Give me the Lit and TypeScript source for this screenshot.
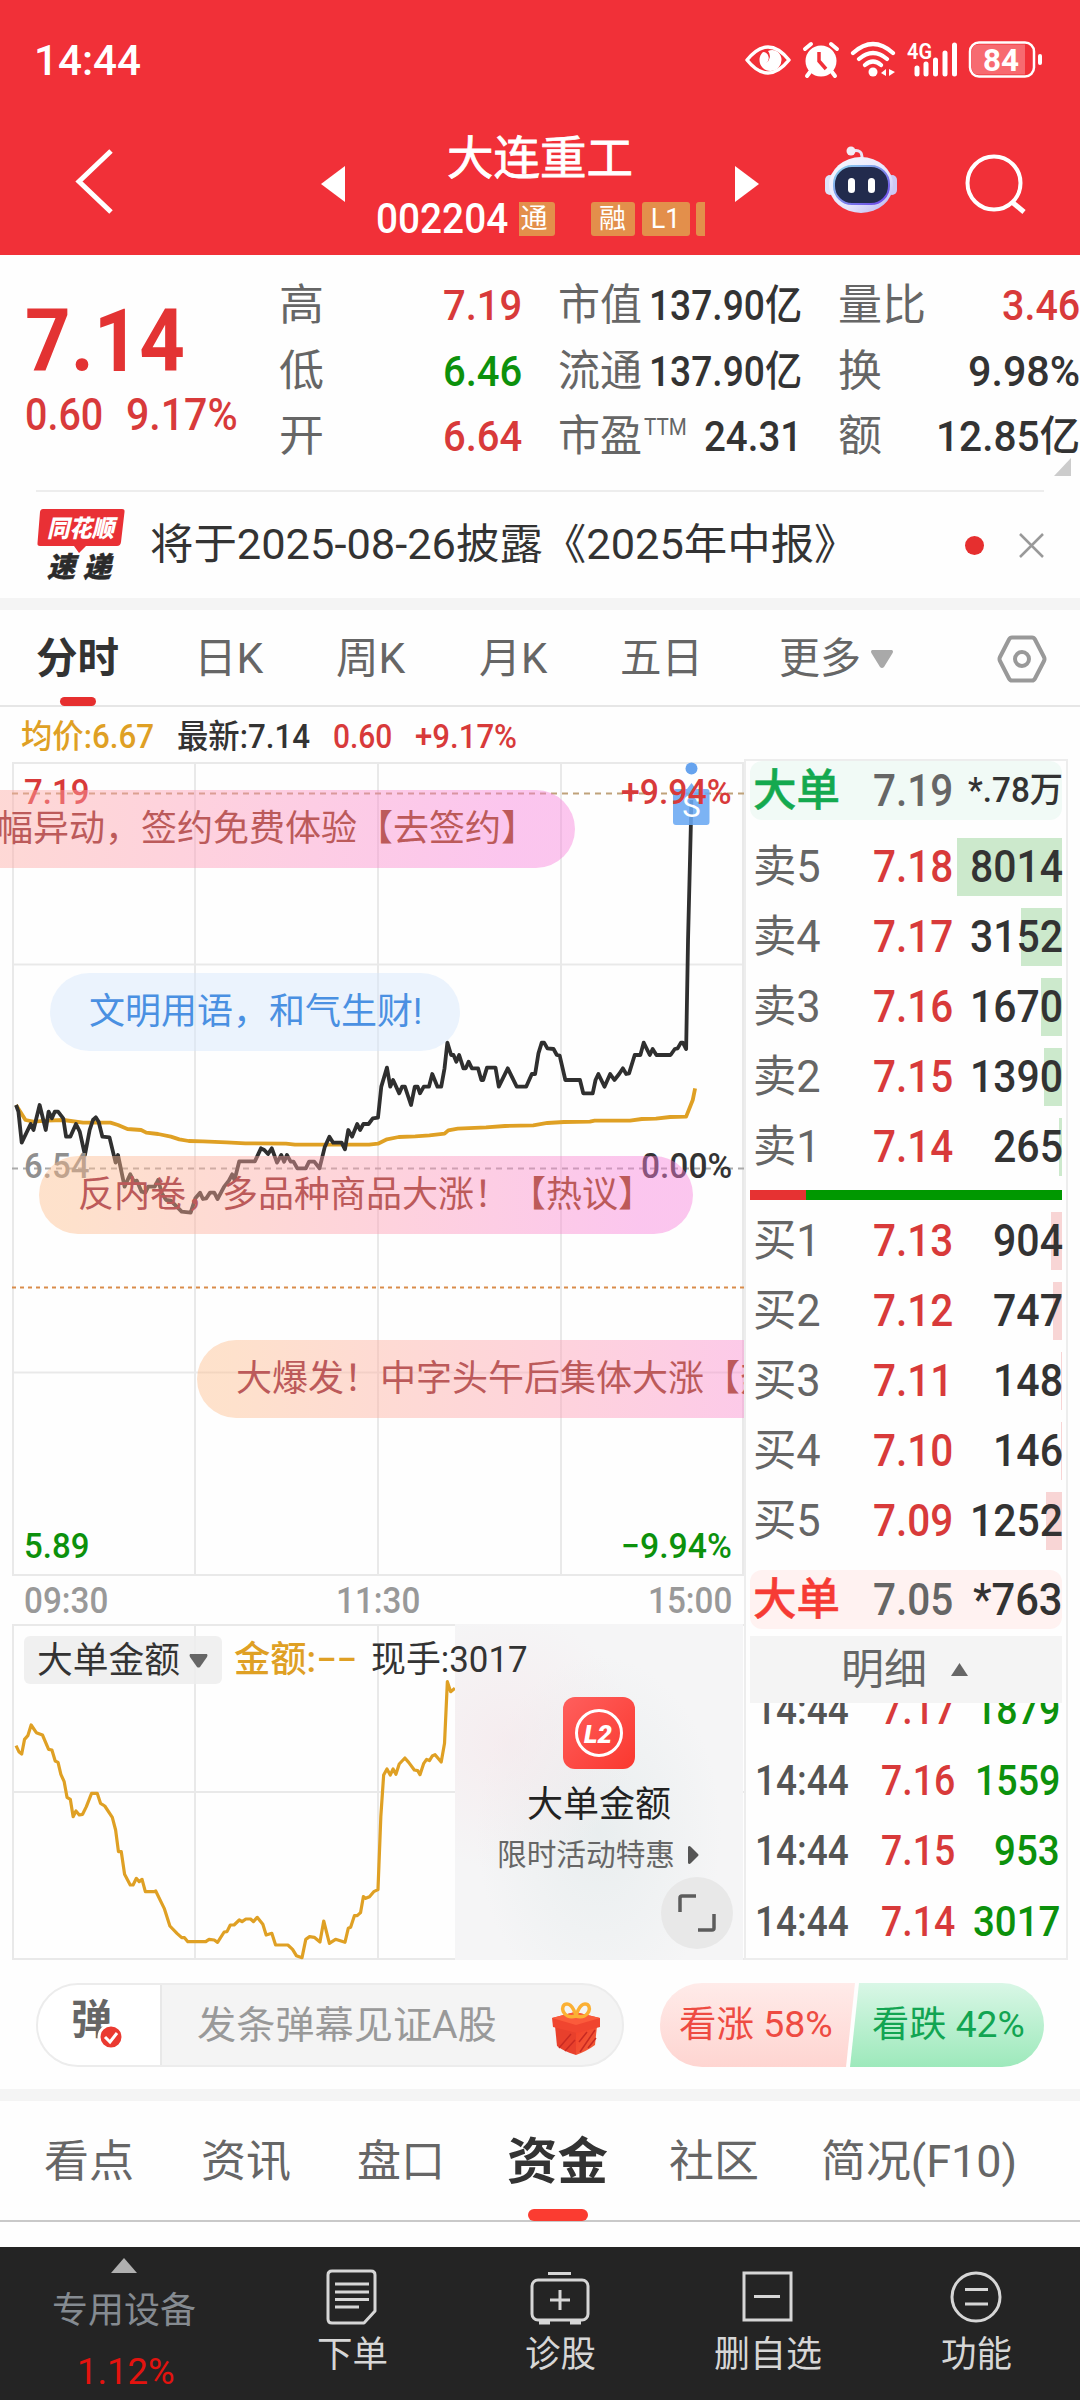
import { LitElement, html, css } from "lit";
import { customElement, property } from "lit/decorators.js";

/** A one-line label whose glyphs are condensed or widened to fill `w` pixels. */
@customElement("fit-text")
class FitText extends LitElement {
  @property({ type: Number }) w = 0;
  @property() text = "";

  static styles = css`
    :host { display: inline-block; flex: none; white-space: nowrap; line-height: 1; }
    span { display: inline-block; transform-origin: 0 50%; white-space: pre; }
  `;

  updated() {
    const span = this.renderRoot.querySelector("span") as HTMLElement;
    const natural = span.offsetWidth;
    this.style.width = `${this.w}px`;
    if (natural > 0 && this.w > 0) {
      span.style.transform = `scaleX(${this.w / natural})`;
      span.style.marginRight = `${this.w - natural}px`;
    }
  }

  render() {
    return html`<span>${this.text}</span>`;
  }
}

const fit = (text: string, w: number, cls = "") =>
  html`<fit-text class=${cls} .w=${w} .text=${text}></fit-text>`;

const PRICE_LINE =
  "34,495 39,515 46,608 65,552 71,570 84,495 97,570 103,515 110,535 116,515 123,515 134,535 140,590 149,590 161,552 169,575 180,645 190,570 197,540 203,532 209,545 217,590 232,592 245,668 250,645 264,740 276,703 284,725 290,722 300,755 308,758 314,740 328,740 335,720 343,760 352,780 362,782 385,815 404,818 414,775 424,758 430,777 437,775 445,758 454,758 461,777 475,740 485,722 492,703 497,720 507,664 540,664 553,625 560,630 568,642 576,625 587,668 596,645 602,665 608,645 616,665 622,665 630,685 648,685 655,665 666,665 677,685 688,622 698,590 706,608 724,608 731,628 738,570 746,590 757,552 763,570 770,552 781,552 790,535 801,533 808,440 820,383 827,440 833,420 846,460 852,440 858,440 871,495 879,440 885,440 890,460 898,440 909,440 916,402 927,440 935,440 942,385 948,308 956,345 961,345 967,365 973,345 982,385 987,385 993,365 1000,385 1013,385 1020,420 1024,420 1032,383 1050,383 1057,440 1076,385 1095,440 1115,440 1127,402 1134,402 1141,340 1148,308 1153,308 1160,325 1173,327 1180,345 1186,347 1198,420 1229,420 1236,460 1256,460 1262,420 1268,402 1281,440 1293,402 1302,420 1312,402 1320,385 1327,402 1333,400 1345,345 1357,345 1364,308 1377,345 1383,327 1391,345 1421,345 1430,327 1436,325 1443,308 1447,308 1454,327 1458,0 1464,-345 1465,-420";
const AVERAGE_LINE =
  "34,495 43,515 54,540 71,545 100,542 134,540 150,543 176,548 206,548 234,548 250,555 270,567 299,570 310,578 335,582 362,590 380,598 400,603 430,604 480,607 520,610 606,611 625,614 782,614 801,611 820,598 845,591 880,589 910,586 942,581 950,571 970,566 1030,562 1070,558 1130,556 1160,549 1195,546 1250,545 1260,542 1335,542 1360,537 1390,536 1420,531 1454,530 1468,480 1473,445";
const AMOUNT_LINE =
  "34,437 40,455 46,462 52,418 59,407 66,375 77,398 90,405 103,448 110,450 117,483 123,487 129,523 136,545 142,592 149,598 155,650 161,633 168,645 175,643 183,620 194,580 206,580 213,610 222,618 238,652 245,690 251,755 257,755 264,823 276,855 282,855 289,835 295,845 301,838 308,875 326,875 330,873 348,925 360,978 375,1000 385,1013 391,1013 398,1025 436,1025 443,1018 454,1020 461,1027 475,996 481,995 488,975 496,975 507,960 513,965 521,957 531,957 537,965 545,952 557,973 564,1005 576,1000 584,1035 610,1035 620,1048 628,1067 640,1073 648,1018 656,1010 666,1012 678,1026 686,963 698,1030 711,1018 731,1027 738,985 743,982 751,947 757,947 764,938 770,890 775,895 783,890 792,875 801,869 807,650 813,525 820,507 827,525 833,507 839,523 846,492 858,474 866,487 878,510 885,512 890,524 898,490 904,478 910,482 916,468 922,464 935,486 942,430 948,245 955,275 964,265";

interface Level { name: string; price: string; qty: string; qtyWidth: number; bar: number; }

const SELLS: Level[] = [
  { name: "卖5", price: "7.18", qty: "8014", qtyWidth: 93, bar: 105 },
  { name: "卖4", price: "7.17", qty: "3152", qtyWidth: 93, bar: 41 },
  { name: "卖3", price: "7.16", qty: "1670", qtyWidth: 93, bar: 21 },
  { name: "卖2", price: "7.15", qty: "1390", qtyWidth: 93, bar: 18 },
  { name: "卖1", price: "7.14", qty: "265", qtyWidth: 70, bar: 3 },
];
const BUYS: Level[] = [
  { name: "买1", price: "7.13", qty: "904", qtyWidth: 70, bar: 11 },
  { name: "买2", price: "7.12", qty: "747", qtyWidth: 70, bar: 9 },
  { name: "买3", price: "7.11", qty: "148", qtyWidth: 70, bar: 1 },
  { name: "买4", price: "7.10", qty: "146", qtyWidth: 70, bar: 1 },
  { name: "买5", price: "7.09", qty: "1252", qtyWidth: 93, bar: 16 },
];
const TICKS: [string, string, number][] = [
  ["7.17", "1879", 85],
  ["7.16", "1559", 85],
  ["7.15", "953", 66],
  ["7.14", "3017", 87],
];

@customElement("app-root")
class AppRoot extends LitElement {
  static styles = css`
    :host {
      display: block; width: 1080px; height: 2400px; overflow: hidden; background: #fefefe; color: #333;
      font-family: Roboto, "Noto Sans CJK SC", sans-serif; line-height: 1;
    }
    * { box-sizing: border-box; }
    svg { display: block; flex: none; }
    .row { display: flex; align-items: center; }
    .red { color: #d83a3a; }
    .green { color: #0c910c; }
    .gold { color: #dfa024; }
    .gray { color: #666; }
    .m { font-weight: 500; }

    .top { height: 255px; background: #f13038; color: #fff; }
    .status { height: 118px; padding: 2px 37px 0 34px; justify-content: space-between; font-size: 43px; font-weight: 500; }
    .title-bar { height: 137px; padding-left: 75px; }
    .back { margin: -10px 207px 0 0; }
    .stock { width: 390px; height: 137px; display: flex; flex-direction: column; align-items: center; font-size: 46px; padding-top: 17px; }
    .stock .name { -webkit-text-stroke: .8px #fff; margin-left: -1px; }
    .stock .code-row { margin-top: 20px; font-size: 42px; height: 36px; width: 329px; }
    .tag { display: flex; align-items: center; justify-content: center; height: 34px; background: #e38f4b; border-radius: 3px; color: #fff; font-size: 27px; }
    .t1 { width: 36px; margin: 0 36px 0 11px; padding-right: 5px; border-radius: 0 3px 3px 0; }
    .t2 { width: 44px; margin-right: 7px; }
    .t3 { width: 48px; margin-right: 6px; }
    .t4 { width: 9px; border-radius: 3px 0 0 3px; }
    .arrow { margin-top: -6px; }
    .robot { margin: -13px 68px 0 66px; }
    .find { margin-top: -6px; }

    .quote { display: grid; grid-template-columns: 279px 278px 281px 242px; height: 235px; position: relative; }
    .quote .price { padding: 42px 0 0 25px; }
    .big { font-size: 88px; font-weight: 700; color: #e33333; }
    .delta { margin-top: 8px; font-size: 44px; gap: 23px; font-weight: 500; }
    .facts { padding-top: 18px; }
    .fact { height: 65.5px; display: flex; align-items: center; justify-content: space-between; font-size: 43px; }
    .c1 .fact { width: 243px; }
    .c2 .fact { width: 244px; margin-left: 1px; }
    .c3 .fact { width: 242px; }
    .fact .m { font-size: 42px; padding-top: 1px; }
    .ttm { font-size: 24px; margin: -20px auto 0 2px; }
    .corner { position: absolute; left: 1054px; top: 203px; width: 17px; height: 18px; background: #ccc; clip-path: polygon(100% 0, 100% 100%, 0 100%); }
    .news { margin: 0 36px; height: 108px; border-top: 2px solid #ededed; font-size: 42px; }
    .news .logo { margin-right: 24px; }
    .news .dot { width: 19px; height: 19px; border-radius: 50%; background: #e62f2f; margin: 0 35px 0 auto; }
    .band { height: 12px; background: #f4f4f4; }

    .periods { height: 97px; border-bottom: 2px solid #e6e6e6; font-size: 42px; color: #666; padding: 2px 0 0 36px; position: relative; }
    .periods .on { font-weight: 700; color: #333; margin-right: 75px; }
    .periods .mark { position: absolute; left: 60px; top: 87px; width: 36px; height: 9px; border-radius: 5px; background: #e62f2f; }
    .g1 { margin-right: 73px; } .g2 { margin-right: 74px; } .g3 { margin-right: 73px; } .g4 { margin-right: 76px; } .g5 { margin-right: 10px; }
    .hex { margin-left: 104px; }

    .main { display: flex; height: 1253px; }
    .left { width: 744px; flex: none; }
    .summary { height: 55px; padding: 3px 0 0 21px; font-size: 33px; font-weight: 500; gap: 23px; }
    .chart { position: relative; height: 814px; overflow: hidden; }
    .chart svg { position: absolute; inset: 0; }
    .ax { position: absolute; font-size: 35px; font-weight: 500; }
    .l { left: 24px; } .r { right: 12px; }
    .base { color: #8f8f8f; }
    .y1 { top: 13px; } .y2 { top: 387px; } .y3 { top: 767px; }
    .bubble { position: absolute; height: 78px; line-height: 78px; border-radius: 39px; padding: 0 38px 0 39px; font-size: 36px; white-space: nowrap; color: #bc5a5a;
      background: linear-gradient(90deg, rgba(255,189,139,.44) 4%, rgba(255,157,175,.44) 50%, rgba(248,126,218,.44) 92%); }
    .b1 { left: -283px; top: 28px; width: 858px; text-align: right; }
    .b2 { left: 50px; top: 211px; width: 410px; background: rgba(212,230,253,.44); color: #4a90e2; }
    .b3 { left: 39px; top: 394px; width: 654px; }
    .b4 { left: 197px; top: 578px; width: 692px; }
    .times { height: 48px; padding: 2px 12px 0 24px; justify-content: space-between; font-size: 36px; color: #999; font-weight: 500; }
    .sub { position: relative; height: 336px; overflow: hidden; }
    .sub > svg { position: absolute; inset: 0; }
    .promo { position: absolute; left: 455px; top: 0; width: 288px; height: 336px; display: flex; flex-direction: column; align-items: center; padding-top: 73px; font-size: 36px;
      background: radial-gradient(circle at 18% 35%, rgba(246,228,232,.5), transparent 40%), radial-gradient(ellipse at 50% 62%, rgba(230,236,237,.8), transparent 60%), #f5f5f6; }
    .promo .name { margin-top: 18px; color: #222; }
    .promo .deal { font-size: 30px; color: #666; margin-top: 17px; gap: 13px; margin-left: -2px; }
    .expand { position: absolute; left: 206px; top: 253px; width: 72px; height: 72px; border-radius: 50%; background: #e8e8e8; display: flex; align-items: center; justify-content: center; }
    .legend { position: relative; padding: 12px 0 0 24px; font-size: 36px; }
    .legend .pick { width: 198px; height: 48px; border-radius: 6px; background: rgba(237,237,237,.85); padding: 1px 0 0 13px; gap: 9px; margin-right: 12px; }
    .legend .gold { margin-right: 14px; font-weight: 500; }

    .book { width: 324px; margin-top: 52px; height: 1201px; border: 2px solid #ededed; padding: 0 4px; font-size: 44px; overflow: hidden; }
    .lvl { position: relative; height: 70px; display: flex; align-items: center; padding-left: 3px; }
    .lvl .p { position: absolute; left: 123px; }
    .lvl .q { position: absolute; right: -1px; }
    .lvl .depth { position: absolute; right: 0; top: 6px; height: 58px; background: #cce9cc; }
    .lvl.buy .depth { background: #f8d5d5; }
    .large { height: 59px; border-radius: 12px; background: #f1faf6; }
    .large .small { font-size: 35px; }
    .large .nm { color: #14a94f; -webkit-text-stroke: .5px currentColor; }
    .large.hot { background: #fff2f1; }
    .large.hot .nm { color: #f63b34; }
    .ratio { height: 10px; margin: 8px 0 6px; display: flex; background: #009800; }
    .ratio i { width: 56px; background: #e63232; }
    .detail { height: 67px; background: #f4f4f4; margin-top: 7px; padding-left: 91px; gap: 24px; font-size: 42px; position: relative; }
    .gap { height: 12px; }
    .gap.wide { height: 14px; }
    .ticks { height: 254px; overflow: hidden; font-size: 42px; font-weight: 500; }
    .tick { height: 70.5px; display: flex; align-items: center; padding: 0 2px 0 5px; position: relative; top: -28px; }
    .tick .time { color: #555; margin-right: 32px; }
    .tick .q2 { margin-left: auto; }

    .talk { height: 129px; padding: 1px 36px 0; }
    .pill { width: 588px; height: 84px; border: 2px solid #ececec; border-radius: 42px; overflow: hidden; background: #f4f4f4; display: flex; margin-right: 36px; }
    .dan { width: 124px; background: #fff; border-right: 2px solid #e8e8e8; position: relative; font-size: 41px; font-weight: 700; color: #666; padding: 15px 0 0 33px; }
    .dan svg { position: absolute; left: 59px; top: 38px; }
    .ask { width: 461px; padding-left: 35px; color: #999; font-size: 38px; justify-content: space-between; padding-right: 21px; }
    .ask svg { margin-top: 8px; }
    .vote { display: flex; width: 384px; height: 84px; border-radius: 42px; overflow: hidden; font-size: 36px; }
    .vote div { display: flex; align-items: center; height: 84px; }
    .up { width: 195px; padding-left: 19px; color: #ee4b42; background: linear-gradient(#ffebe9, #fed5d1); clip-path: polygon(0 0, 100% 0, 186px 100%, 0 100%); }
    .down { width: 194px; margin-left: -5px; padding-left: 22px; color: #12a552; background: linear-gradient(#d9f7e6, #9de9bb); clip-path: polygon(9px 0, 100% 0, 100% 100%, 0 100%); }

    .sections { height: 121px; border-bottom: 2px solid #c9c9c9; padding: 3px 0 0 44px; font-size: 44px; color: #666; position: relative; }
    .sections .cur { font-size: 50px; font-weight: 700; color: #333; }
    .sections .line { position: absolute; left: 528px; top: 108px; width: 60px; height: 12px; border-radius: 6px; background: #fb3c31; }
    .s1 { margin-right: 67px; } .s2 { margin-right: 66px; } .s3 { margin-right: 62px; } .s4 { margin-right: 61px; } .s5 { margin-right: 62px; }

    .nav { margin-top: 25px; height: 154px; background: #242424; display: flex; color: #d6d6d6; font-size: 36px; }
    .sector { width: 248px; display: flex; flex-direction: column; align-items: center; padding-top: 11px; color: #858b91; }
    .sector fit-text { margin-top: 20px; }
    .sector .chg { margin-top: 25px; margin-left: 3px; color: #e3130f; }
    .item { width: 208px; display: flex; flex-direction: column; align-items: center; padding-top: 22px; }
    .item fit-text { margin-top: 12px; }
  `;

  private level(l: Level, side: string) {
    return html`<div class="lvl ${side}">
      <div class="depth" style="width:${l.bar}px"></div>
      ${fit(l.name, 68, "gray")}
      ${fit(l.price, 80, "p m red")}
      ${fit(l.qty, l.qtyWidth, "q m")}
    </div>`;
  }

  private statusIcons() {
    return html`<svg width="300" height="40" viewBox="743 38 300 40" fill="none" stroke="#fff">
      <path d="M747 58 Q768 32 789 58 Q768 84 747 58Z" stroke-width="3.5" stroke-linejoin="round"/>
      <path d="M763 50 A11 11 0 1 0 778 50 A10 10 0 0 0 768 49 A8 8 0 0 1 766 61 A6 6 0 0 0 763 50Z" fill="#fff" stroke="none"/>
      <circle cx="821" cy="59" r="15.5" fill="#fff" stroke="none"/>
      <path d="M805 47 L811 42 M837 47 L831 42 M810 70 L807 74 M832 70 L835 74" stroke-width="4" stroke-linecap="round"/>
      <path d="M819 50 V59 L826 67" stroke="#f13038" stroke-width="3.5"/>
      <path d="M853 51 Q873 33 893 51 M859 57 Q873 45 887 57 M865 63 Q873 56 881 63" stroke-width="4.2" stroke-linecap="round"/>
      <circle cx="873" cy="70" r="4.5" fill="#fff" stroke="none"/>
      <path d="M881 71 L886 67 V74Z M895 70 L889 67 V74Z" fill="#fff" stroke="none"/>
      <path d="M917 66 V72 M926 62 V72 M935.500 58 V72 M945 51 V72 M954.500 43 V72" stroke-width="5" stroke-linecap="round"/>
      <text x="907" y="57" font-size="22" font-weight="600" fill="#fff" stroke="none" textLength="25" lengthAdjust="spacingAndGlyphs">4G</text>
      <rect x="970" y="40.500" width="64" height="34" rx="9" stroke-width="2.500"/>
      <path d="M978 42.500 H1025 V72.500 H978 Q972 72.500 972 66.500 V48.500 Q972 42.500 978 42.500Z" fill="#f76a70" stroke="none"/>
      <rect x="1038" y="52" width="4" height="11" rx="2" fill="#fff" stroke="none"/>
      <text x="983" y="69" font-size="32" font-weight="700" fill="#fff" stroke="none" textLength="36" lengthAdjust="spacingAndGlyphs">84</text>
    </svg>`;
  }

  private chart() {
    return html`<svg width="744" height="814" viewBox="0 0 744 814" fill="none">
      <path d="M13 0 V814 M195 0 V814 M378 0 V814 M561 0 V814 M743 0 V814 M12 202.500 H744 M12 610.500 H744 M12 1 H744 M12 813 H744" stroke="#e9e9e9" stroke-width="2"/>
      <path d="M12 31.500 H744" stroke="#bfa27a" stroke-width="2" stroke-dasharray="6 5"/>
      <path d="M12 406.500 H744" stroke="#aaa" stroke-width="2" stroke-dasharray="6 5"/>
      <path d="M12 525.500 H744" stroke="#d98c4a" stroke-width="2" stroke-dasharray="4 4"/>
      <g transform="translate(0 178) scale(.4719 .33333)" stroke-width="3.800" stroke-linejoin="round">
        <polyline points=${AVERAGE_LINE} stroke="#dfa024" vector-effect="non-scaling-stroke"/>
        <polyline points=${PRICE_LINE} stroke="#2f2f2f" vector-effect="non-scaling-stroke"/>
      </g>
      <circle cx="691.500" cy="6.500" r="6" fill="#66a3ee"/>
      <path d="M676 27 H687 L691.500 21 L696 27 H707 Q709.500 27 709.500 30 V60 Q709.500 63 706.500 63 H676 Q673 63 673 60 V30 Q673 27 676 27Z" fill="#6aa9f2" fill-opacity=".88"/>
      <text x="691.500" y="55" text-anchor="middle" font-size="31" fill="#fff">S</text>
    </svg>`;
  }

  render() {
    return html`
      <div class="top">
        <div class="row status">${fit("14:44", 107)}${this.statusIcons()}</div>
        <div class="row title-bar">
          <svg class="back" width="39" height="68" viewBox="0 0 39 68"><path d="M36 3 L4 33.500 L36 64" fill="none" stroke="#fff" stroke-width="5"/></svg>
          <svg class="arrow" width="24" height="36"><path d="M24 0 V36 L0 18Z" fill="#fff"/></svg>
          <div class="stock">
            ${fit("大连重工", 186, "name")}
            <div class="row code-row">
              ${fit("002204", 132, "m")}
              <span class="tag t1">通</span><span class="tag t2">融</span><span class="tag t3">L1</span><span class="tag t4"></span>
            </div>
          </div>
          <svg class="arrow" width="24" height="36"><path d="M0 0 V36 L24 18Z" fill="#fff"/></svg>
          <svg class="robot" width="72" height="68" viewBox="0 0 72 68">
            <defs>
              <linearGradient id="hd" x1="0" y1="0" x2="1" y2="1"><stop offset="0" stop-color="#f7f8ff"/><stop offset=".6" stop-color="#e6e5fb"/><stop offset="1" stop-color="#b3aef0"/></linearGradient>
              <linearGradient id="rim" x1="0" y1="0" x2="1" y2="1"><stop offset="0" stop-color="#8fd8ee"/><stop offset="1" stop-color="#6a3fe6"/></linearGradient>
            </defs>
            <path d="M27 5 Q38 2 37 14" fill="none" stroke="#e9e4f6" stroke-width="3"/><circle cx="26" cy="5" r="4.500" fill="#f3ecf6"/>
            <rect x="0" y="29" width="10" height="20" rx="5" fill="#dfe3fa"/><rect x="62" y="29" width="10" height="20" rx="5" fill="#cdc8f3"/>
            <ellipse cx="36" cy="39" rx="32" ry="28" fill="url(#hd)"/>
            <rect x="9" y="20" width="55" height="38" rx="18" fill="#222b4d" stroke="url(#rim)" stroke-width="2"/>
            <rect x="23" y="32" width="7" height="15" rx="3.500" fill="#fff"/><rect x="43" y="32" width="7" height="15" rx="3.500" fill="#fff"/>
          </svg>
          <svg class="find" width="62" height="62" viewBox="0 0 62 62" fill="none" stroke="#fff" stroke-width="4"><circle cx="29" cy="30" r="26.500"/><path d="M47 49 L59 59" stroke-width="5"/></svg>
        </div>
      </div>

      <div class="quote">
        <div class="price">
          ${fit("7.14", 160, "big")}
          <div class="row delta red">${fit("0.60", 78)}${fit("9.17%", 112)}</div>
        </div>
        <div class="facts c1">
          <div class="fact">${fit("高", 45, "gray")}${fit("7.19", 79, "m red")}</div>
          <div class="fact">${fit("低", 45, "gray")}${fit("6.46", 79, "m green")}</div>
          <div class="fact">${fit("开", 45, "gray")}${fit("6.64", 79, "m red")}</div>
        </div>
        <div class="facts c2">
          <div class="fact">${fit("市值", 84, "gray")}${fit("137.90亿", 153, "m")}</div>
          <div class="fact">${fit("流通", 84, "gray")}${fit("137.90亿", 153, "m")}</div>
          <div class="fact">${fit("市盈", 84, "gray")}${fit("TTM", 43, "gray ttm")}${fit("24.31", 98, "m")}</div>
        </div>
        <div class="facts c3">
          <div class="fact">${fit("量比", 88, "gray")}${fit("3.46", 78, "m red")}</div>
          <div class="fact">${fit("换", 44, "gray")}${fit("9.98%", 112, "m")}</div>
          <div class="fact">${fit("额", 44, "gray")}${fit("12.85亿", 144, "m")}</div>
        </div>
        <i class="corner"></i>
      </div>

      <div class="row news">
        <svg class="logo" width="90" height="74" viewBox="0 0 90 74">
          <path d="M7 1 H86 Q89 1 88.500 4 L85 34 Q84.500 38 81 38 H50 L43 45 L38 38 H4 Q1 38 1.500 35 L4 4 Q4.500 1 7 1Z" fill="#e93035"/>
          <g font-weight="900" font-style="italic"><text x="11" y="29" font-size="24" fill="#fff" textLength="67" lengthAdjust="spacingAndGlyphs">同花顺</text>
          <text x="11" y="69" font-size="28" fill="#2b2b2b" stroke="#2b2b2b" stroke-width=".5" textLength="64">速递</text></g>
        </svg>
        ${fit("将于2025-08-26披露《2025年中报》", 707)}
        <i class="dot"></i>
        <svg width="25" height="25" viewBox="0 0 25 25" stroke="#999" stroke-width="2.500"><path d="M1 1 L24 24 M24 1 L1 24"/></svg>
      </div>
      <div class="band"></div>

      <div class="row periods">
        ${fit("分时", 83, "on")}${fit("日K", 69, "g1")}${fit("周K", 69, "g2")}${fit("月K", 68, "g3")}${fit("五日", 83, "g4")}${fit("更多", 82, "g5")}
        <svg width="22" height="18"><path d="M1 0 H21 Q23 1 21 4 L13 17 Q11 19 9 17 L1 4 Q-1 1 1 0Z" fill="#a9a9a9"/></svg>
        <svg class="hex" width="50" height="48" viewBox="0 0 50 48" fill="none" stroke="#999" stroke-width="4"><path d="M15 2.500 H35 Q37 2.500 38 4.500 L47 22 Q48 24 47 26 L38 43.500 Q37 45.500 35 45.500 H15 Q13 45.500 12 43.500 L3 26 Q2 24 3 22 L12 4.500 Q13 2.500 15 2.500Z" stroke-linejoin="round"/><circle cx="25" cy="24" r="7"/></svg>
        <i class="mark"></i>
      </div>

      <div class="main">
        <div class="left">
          <div class="row summary">${fit("均价:6.67", 133, "gold")}${fit("最新:7.14", 133)}${fit("0.60", 59, "red")}${fit("+9.17%", 102, "red")}</div>
          <div class="chart">
            ${this.chart()}
            ${fit("7.19", 65, "ax l y1 red")}${fit("+9.94%", 111, "ax r y1 red")}
            ${fit("6.54", 65, "ax l y2 base")}${fit("0.00%", 91, "ax r y2")}
            ${fit("5.89", 65, "ax l y3 green")}${fit("−9.94%", 111, "ax r y3 green")}
            <div class="bubble b1">幅异动，签约免费体验【去签约】</div>
            <div class="bubble b2">文明用语，和气生财!</div>
            <div class="bubble b3">反内卷，多品种商品大涨！【热议】</div>
            <div class="bubble b4">大爆发！中字头午后集体大涨【热议】</div>
          </div>
          <div class="row times">${fit("09:30", 84)}${fit("11:30", 84)}${fit("15:00", 84)}</div>
          <div class="sub">
            <svg width="744" height="336" viewBox="0 0 744 336" fill="none">
              <path d="M13 0 V336 M195 0 V336 M378 0 V336 M12 1 H744 M12 168 H744 M12 335 H744" stroke="#e9e9e9" stroke-width="2"/>
              <g transform="translate(0 -24) scale(.4719 .33333)"><polyline points=${AMOUNT_LINE} stroke="#dfa024" stroke-width="3.200" stroke-linejoin="round" vector-effect="non-scaling-stroke"/></g>
            </svg>
            <div class="promo">
              <svg width="72" height="72" viewBox="0 0 72 72">
                <defs><linearGradient id="l2" x1="0" y1="0" x2="1" y2="1"><stop offset="0" stop-color="#ff5f5d"/><stop offset="1" stop-color="#fa382f"/></linearGradient></defs>
                <rect width="72" height="72" rx="12" fill="url(#l2)"/><circle cx="36" cy="36" r="22.500" fill="none" stroke="#fff" stroke-width="3"/>
                <text x="21" y="46" font-size="25" font-weight="900" font-style="italic" fill="#fff" textLength="28" lengthAdjust="spacingAndGlyphs">L2</text>
              </svg>
              ${fit("大单金额", 144, "name")}
              <div class="row deal">${fit("限时活动特惠", 178)}<svg width="11" height="18"><path d="M0 1 Q1 -1 3 1 L10 8 Q11 9 10 10 L3 17 Q1 19 0 17Z" fill="#555"/></svg></div>
              <div class="expand"><svg width="38" height="38" viewBox="0 0 38 38" fill="none" stroke="#5c5c5c" stroke-width="3.500"><path d="M2 18 V4 Q2 2 4 2 H18 M36 20 V34 Q36 36 34 36 H20"/></svg></div>
            </div>
            <div class="row legend">
              <div class="row pick">${fit("大单金额", 143)}<svg width="19" height="14"><path d="M1 0 H18 Q19 1 18 3 L11 13 Q9.500 14 8 13 L1 3 Q0 1 1 0Z" fill="#666"/></svg></div>
              ${fit("金额:−−", 123, "gold")}${fit("现手:3017", 157)}
            </div>
          </div>
        </div>

        <div class="book">
          <div class="lvl large">${fit("大单", 87, "nm m")}${fit("7.19", 80, "p m gray")}${fit("*.78万", 95, "q m small")}</div>
          <div class="gap"></div>
          ${SELLS.map((l) => this.level(l, "sell"))}
          <div class="ratio"><i></i></div>
          ${BUYS.map((l) => this.level(l, "buy"))}
          <div class="gap wide"></div>
          <div class="lvl large hot">${fit("大单", 87, "nm m")}${fit("7.05", 80, "p m gray")}${fit("*763", 90, "q m")}</div>
          <div class="row detail gray">${fit("明细", 86)}<svg width="17" height="13"><path d="M0 13 L8.500 0 L17 13Z" fill="#666"/></svg></div>
          <div class="ticks">
            ${TICKS.map(([p, q, w]) => html`<div class="tick">${fit("14:44", 94, "time")}${fit(p, 74, "red")}${fit(q, w, "q2 green")}</div>`)}
          </div>
        </div>
      </div>

      <div class="row talk">
        <div class="pill">
          <div class="dan">${fit("弹", 41)}
            <svg width="28" height="28" viewBox="0 0 28 28"><circle cx="14" cy="14" r="12" fill="#ea3a31" stroke="#fff" stroke-width="3"/><path d="M8 14 L13 19 L20 10" fill="none" stroke="#fff" stroke-width="3"/></svg>
          </div>
          <div class="row ask">${fit("发条弹幕见证A股", 300)}
            <svg width="50" height="54" viewBox="0 0 50 54">
              <defs><linearGradient id="bx" x1="0" y1="0" x2="1" y2="1"><stop offset="0" stop-color="#f5412b"/><stop offset="1" stop-color="#f0603a"/></linearGradient></defs>
              <path d="M4 24 L25 30 V53 Q14 50 6 44Z" fill="#e8402c"/><path d="M46 24 L25 30 V53 Q36 49 44 43Z" fill="url(#bx)"/>
              <path d="M1 16 L24 10 L49 16 V25 L26 31 L2 25Z" fill="#f0452f"/><path d="M1 16 L24 10 L49 16 L25 23Z" fill="#fb5b3b"/>
              <path d="M8 46 L20 32 M14 49 L24 38 M29 50 L44 28 M28 40 L36 30 M37 46 L45 36" stroke="#c92a22" stroke-width="1.500"/>
              <path d="M25 14 C11 18 8 2 16 2 C22 2 25 14 25 14 C25 14 28 2 34 2 C42 2 39 18 25 14Z" fill="none" stroke="#fbb034" stroke-width="3.500"/>
            </svg>
          </div>
        </div>
        <div class="vote">
          <div class="up">${fit("看涨 58%", 154)}</div>
          <div class="down">${fit("看跌 42%", 153)}</div>
        </div>
      </div>
      <div class="band"></div>

      <div class="row sections">
        ${fit("看点", 90, "s1")}${fit("资讯", 90, "s2")}${fit("盘口", 88, "s3")}${fit("资金", 101, "cur s4")}${fit("社区", 90, "s5")}${fit("简况(F10)", 196)}
        <i class="line"></i>
      </div>

      <div class="nav">
        <div class="sector">
          <svg width="26" height="15"><path d="M13 0 L26 15 H0Z" fill="#b0b0b0"/></svg>
          ${fit("专用设备", 144)}${fit("1.12%", 98, "chg")}
        </div>
        <div class="item">
          <svg width="52" height="56" viewBox="0 0 52 56" fill="none" stroke="#d6d6d6" stroke-width="3"><path d="M6 2 H45 Q49 2 49 6 V42 L38 54 H6 Q2 54 2 50 V6 Q2 2 6 2Z" stroke-linejoin="round"/><path d="M9 15 H43 M9 23 H43 M9 30.500 H43 M9 38 H33"/></svg>
          ${fit("下单", 71)}
        </div>
        <div class="item">
          <svg width="60" height="56" viewBox="0 0 60 56" fill="none" stroke="#d6d6d6" stroke-width="3"><path d="M18 4.500 H41"/><rect x="2" y="11" width="56" height="40" rx="6"/><path d="M30 21 V41 M20 31 H40"/><path d="M9 53.500 H20 M40 53.500 H51" stroke-width="4"/></svg>
          ${fit("诊股", 71)}
        </div>
        <div class="item">
          <svg width="52" height="56" viewBox="0 0 52 56" fill="none" stroke="#d6d6d6" stroke-width="3"><rect x="2" y="4" width="47" height="47"/><path d="M12 27.500 H38"/></svg>
          ${fit("删自选", 108)}
        </div>
        <div class="item">
          <svg width="52" height="56" viewBox="0 0 52 56" fill="none" stroke="#d6d6d6" stroke-width="3"><circle cx="26" cy="28" r="24"/><path d="M15 20.500 H38 M15 35 H38"/></svg>
          ${fit("功能", 71)}
        </div>
      </div>
    `;
  }
}
